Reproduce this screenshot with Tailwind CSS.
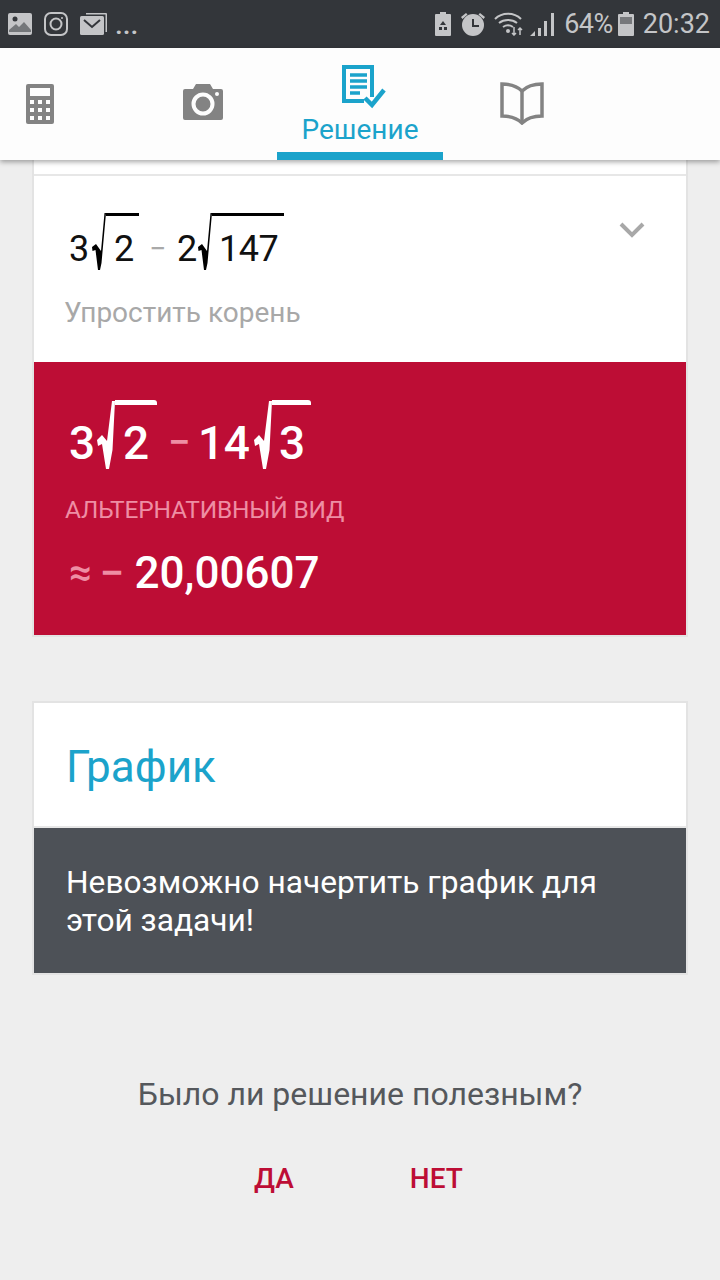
<!DOCTYPE html>
<html lang="ru">
<head>
  <meta charset="UTF-8" />
  <meta name="viewport" content="width=device-width, initial-scale=1.0" />
  <title>Решение</title>
  <script src="https://cdn.jsdelivr.net/npm/@tailwindcss/browser@4"></script>
</head>
<body class="bg-[#eeeeee] font-['Roboto',sans-serif] w-[720px] h-[1280px] overflow-hidden flex flex-col">
  <!-- status bar -->
  <div class="h-12 bg-[#33363a] flex items-center justify-between pl-2 pr-[10px] text-[#c4c5c7] shrink-0">
    <div class="flex items-center gap-[12px]">
      <svg width="24" height="24" viewBox="0 0 24 24"><rect width="24" height="22" y="1" rx="2" fill="#c4c5c7"/><circle cx="7" cy="7" r="2.5" fill="#33363a"/><path d="M1 18l7-6 3 3 5-5 7 8v2H1z" fill="#33363a" opacity=".55"/></svg>
      <svg width="24" height="24" viewBox="0 0 24 24" fill="none" stroke="#c4c5c7" stroke-width="2"><rect x="1" y="1" width="22" height="22" rx="6"/><circle cx="12" cy="12" r="5.5"/><circle cx="18" cy="6" r="1" fill="#c4c5c7" stroke="none"/></svg>
      <svg width="28" height="24" viewBox="0 0 28 24"><path d="M6 1h20a1 1 0 0 1 1 1v18h-1.500V2.500H6z" fill="#c4c5c7"/><rect y="4" width="24" height="19" rx="1.500" fill="#c4c5c7"/><path d="M4 8l8 7 8-7" fill="none" stroke="#33363a" stroke-width="2"/></svg>
      <span class="text-[28px] leading-none -ml-[5px] mt-[2px] font-medium">...</span>
    </div>
    <div class="flex items-center">
      <svg width="16" height="24" viewBox="0 0 16 24" class="mr-[9px]"><path d="M5 0h6v2h4a1 1 0 0 1 1 1v20a1 1 0 0 1-1 1H1a1 1 0 0 1-1-1V3a1 1 0 0 1 1-1h4z" fill="#c4c5c7"/><path d="M8 9l3 4H5zM4 15h3v3H4zM9 15h3v3H9z" fill="#33363a"/></svg>
      <svg width="26" height="26" viewBox="0 0 26 26" class="mr-[8px]" fill="#c4c5c7"><circle cx="13" cy="14" r="11"/><path d="M1 6l5-4 1.500 1.500-5 4.500zM25 6l-5-4-1.500 1.500 5 4.500z"/><path d="M13 8v7h6" fill="none" stroke="#33363a" stroke-width="2"/></svg>
      <svg width="30" height="24" viewBox="0 0 30 24" fill="none" stroke="#c4c5c7" stroke-width="2" class="mr-[6px]"><path d="M1 7c7-7 19-7 26 0M5 11c5-4 13-4 18 0M9 15c3-2 7-2 10 0"/><circle cx="14" cy="19" r="2" fill="#c4c5c7" stroke="none"/><path d="M20 15v8M18 21l2 2 2-2M26 23v-7M24 18l2-2 2 2" stroke-width="1.500"/></svg>
      <svg width="24" height="24" viewBox="0 0 24 24" fill="#c4c5c7" class="mr-[10px]"><path d="M0 24l5-5v5zM8 24v-8h3v8zM14 24V9h3v15zM21 24V1h3v23z"/></svg>
      <span class="text-[27px] leading-none tracking-[-0.5px]">64%</span>
      <svg width="16" height="24" viewBox="0 0 16 24" class="ml-[5px] mr-[9px]"><path d="M5 0h6v2h4a1 1 0 0 1 1 1v20a1 1 0 0 1-1 1H1a1 1 0 0 1-1-1V3a1 1 0 0 1 1-1h4z" fill="#c4c5c7"/><rect x="2" y="5" width="12" height="7" fill="#77797c"/></svg>
      <span class="text-[27px] leading-none">20:32</span>
    </div>
  </div>

  <!-- tabs -->
  <div class="relative z-10 h-[112px] bg-[#fdfdfd] shadow-[0_2px_5px_rgba(0,0,0,0.35)] flex shrink-0">
    <div class="w-[86px] pt-[36px] pl-[26px]">
      <svg width="28" height="40" viewBox="0 0 28 40"><rect width="28" height="40" rx="2" fill="#838383"/><rect x="4" y="4" width="20" height="8" fill="#fdfdfd"/><path d="M4 16h4v4H4zM12 16h4v4h-4zM20 16h4v4h-4zM4 24h4v4H4zM12 24h4v4h-4zM20 24h4v4h-4zM4 32h4v4H4zM12 32h4v4h-4zM20 32h4v4h-4z" fill="#fdfdfd"/></svg>
    </div>
    <div class="w-[191px] pt-[36px] pl-[97px]">
      <svg width="40" height="36" viewBox="0 0 40 36"><path d="M2 5h8l3-5h14l3 5h8a2 2 0 0 1 2 2v27a2 2 0 0 1-2 2H2a2 2 0 0 1-2-2V7a2 2 0 0 1 2-2z" fill="#838383"/><circle cx="20" cy="20" r="9.500" fill="none" stroke="#fdfdfd" stroke-width="4"/><circle cx="34" cy="10" r="2" fill="#fdfdfd"/></svg>
    </div>
    <div class="w-[166px] h-full border-b-[8px] border-[#1ba3cb] flex flex-col items-center">
      <svg width="44" height="44" viewBox="0 0 44 44" class="mt-[17px] ml-[7px]" fill="none" stroke="#1ba3cb"><path d="M30 32V2H2v34h20" stroke-width="4"/><path d="M8 10h17M8 16h17M8 22h17M8 28h10" stroke-width="3.500"/><path d="M23 33l7 7 12-15" stroke-width="4.500"/></svg>
      <span class="text-[28px] leading-[32px] text-[#1ba3cb] mt-[5px]">Решение</span>
    </div>
    <div class="pt-[33px] pl-[57px]">
      <svg width="44" height="44" viewBox="0 0 44 44" fill="none" stroke="#838383" stroke-width="3.500"><path d="M2 3c8 0 15 2 20 7 5-5 12-7 20-7v32c-8 0-15 2-20 7-5-5-12-7-20-7z" stroke-linejoin="miter"/><path d="M22 10v32"/></svg>
    </div>
  </div>

  <!-- content -->
  <div class="px-[32px] flex flex-col flex-1">
    <!-- result card -->
    <div class="border-x-[2px] border-b-[2px] border-[#e3e3e3]">
      <div class="h-[16px] bg-white border-b-[2px] border-[#e7e7e7]"></div>
      <div class="relative h-[186px] bg-white pl-[35px]">
        <div class="flex items-start pt-[37px] h-[95px] text-[36px] leading-[40px] text-[#111111]">
          <span class="mt-[16px] w-[22px]">3</span>
          <svg width="14" height="58" viewBox="0 0 14 58" class="ml-[1px] shrink-0" fill="#000"><path d="M0 34l4-3 5 7L12.500 0H14L9.500 50 8 57H6L3.500 37l-3 1z"/></svg>
          <span class="border-t-[3px] border-black pt-[13px] w-[33px] pl-[8px]">2</span>
          <span class="mt-[16px] ml-[10px] w-[17px] text-[30px] text-[#a9a9a9]">−</span>
          <span class="mt-[16px] ml-[11px] w-[21px]">2</span>
          <svg width="14" height="58" viewBox="0 0 14 58" class="shrink-0" fill="#000"><path d="M0 34l4-3 5 7L12.500 0H14L9.500 50 8 57H6L3.500 37l-3 1z"/></svg>
          <span class="border-t-[3px] border-black pt-[13px] w-[72px] pl-[7px] tracking-[-0.5px]">147</span>
        </div>
        <div class="text-[28px] leading-[32px] text-[#a8a8a8] mt-[26px] -ml-[5px]">Упростить корень</div>
        <svg width="26" height="16" viewBox="0 0 26 16" class="absolute right-[41px] top-[46px]" fill="none" stroke="#a8a8a8" stroke-width="4"><path d="M2 2l11 11L24 2"/></svg>
      </div>
      <div class="h-[273px] bg-[#bd0d35] pl-[35px] text-white">
        <div class="flex items-start pt-[38px] h-[108px] text-[46px] leading-[50px] font-medium">
          <span class="mt-[18px] w-[26px]">3</span>
          <svg width="18" height="70" viewBox="0 0 18 70" class="ml-[2px] shrink-0" fill="#fff"><path d="M0 40l5-5 5 6L15 1h3l-2.500 49L12 69H9L5 44l-4 2z"/></svg>
          <span class="border-t-[5px] border-white rounded-tr-[3px] w-[42px] pt-[13px] pl-[8px]">2</span>
          <span class="mt-[18px] ml-[11px] w-[22px] text-[40px] text-[#ee8ea4]">−</span>
          <span class="mt-[18px] ml-[8px] w-[52px] tracking-[-0.5px]">14</span>
          <svg width="18" height="70" viewBox="0 0 18 70" class="ml-[4px] shrink-0" fill="#fff"><path d="M0 40l5-5 5 6L15 1h3l-2.500 49L12 69H9L5 44l-4 2z"/></svg>
          <span class="border-t-[5px] border-white rounded-tr-[3px] w-[39px] pt-[13px] pl-[7px]">3</span>
        </div>
        <div class="text-[24.500px] leading-[28px] text-[#ee8ea4] mt-[26px] -ml-[4px] tracking-[-0.2px]">АЛЬТЕРНАТИВНЫЙ ВИД</div>
        <div class="flex items-center mt-[23px] text-[44px] leading-[52px] font-medium">
          <span class="text-[#ee8ea4] text-[40px]">≈</span>
          <span class="text-[#ee8ea4] ml-[8px] mr-[10px]">−</span>
          <span>20,00607</span>
        </div>
      </div>
    </div>

    <!-- graph card -->
    <div class="mt-[64px] border-2 border-[#e3e3e3]">
      <div class="h-[123px] bg-white flex items-center pl-[32px] pt-[4px] text-[44px] text-[#1ba3cb]">График</div>
      <div class="h-[147px] bg-[#4d5157] border-t-[2px] border-[#e7e7e7] pl-[32px] pt-[36px] text-[31.700px] leading-[38px] text-white">Невозможно начертить график для<br />этой задачи!</div>
    </div>

    <!-- feedback -->
    <div class="mt-[101px] text-center text-[32px] leading-[36px] text-[#55585c]">Было ли решение полезным?</div>
    <div class="mt-[51px] flex justify-center gap-[116px] -ml-[3px] text-[28px] leading-[32px] font-medium text-[#bd0d35]">
      <span>ДА</span>
      <span>НЕТ</span>
    </div>
  </div>
</body>
</html>
